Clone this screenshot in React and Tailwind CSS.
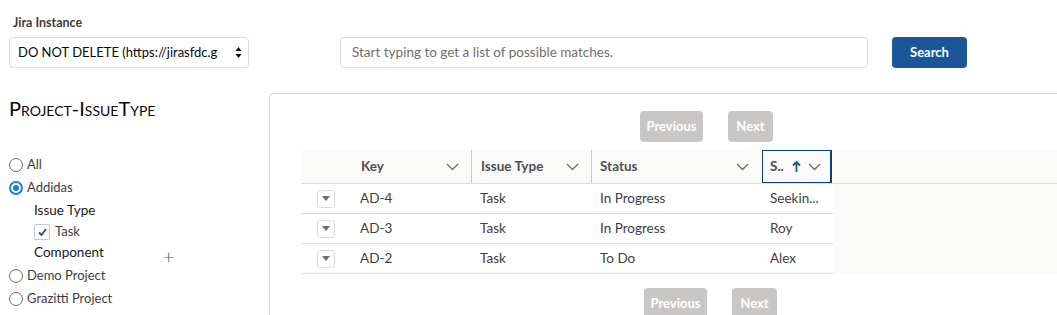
import React from 'react';

const Chevron = ({ className = '' }) => (
  <svg className={className} width="13" height="8" viewBox="0 0 13 8" fill="none">
    <path d="M1 1l5.5 5.5L12 1" stroke="#706e6b" strokeWidth="1.3" />
  </svg>
);

const Radio = ({ checked, label }) => (
  <div className="flex items-center h-[23px]">
    {checked ? (
      <span className="w-[14px] h-[14px] rounded-full border-2 border-[#1b7fe0] flex items-center justify-center">
        <span className="w-[6px] h-[6px] rounded-full bg-[#1b7fe0]" />
      </span>
    ) : (
      <span className="w-[14px] h-[14px] rounded-full border border-[#6b6b6b]" />
    )}
    <span className="ml-[4px] text-[13px] text-[#3e3e3c]">{label}</span>
  </div>
);

const rows = [
  { key: 'AD-4', type: 'Task', status: 'In Progress', s: 'Seekin...' },
  { key: 'AD-3', type: 'Task', status: 'In Progress', s: 'Roy' },
  { key: 'AD-2', type: 'Task', status: 'To Do', s: 'Alex' },
];

const Pager = ({ ml }) => (
  <div className={`flex gap-[25px] ${ml}`}>
    <div className="h-[31px] w-[63px] rounded-[4px] bg-[#c9c7c5] text-white text-[13px] font-bold flex items-center justify-center">Previous</div>
    <div className="h-[31px] w-[45px] rounded-[4px] bg-[#c9c7c5] text-white text-[13px] font-bold flex items-center justify-center">Next</div>
  </div>
);

export default function App() {
  return (
    <div className="w-[1057px] h-[315px] overflow-hidden bg-white font-['Lato',sans-serif] text-[#080707]">
      {/* Top search bar */}
      <div className="flex items-end pt-[15px]">
        <div className="ml-[9px] w-[240px]">
          <div className="pl-[4px] text-[12.5px] font-bold text-[#3e3e3c] leading-[16px] mb-[6px]">Jira Instance</div>
          <div className="h-[31px] border border-[#dddbda] rounded-[4px] flex items-center pl-[8px] pr-[6px]">
            <span className="flex-1 text-[13px] whitespace-nowrap overflow-hidden">DO NOT DELETE (https://jirasfdc.g</span>
            <svg width="7" height="13" viewBox="0 0 7 13" className="ml-[4px]">
              <path d="M3.5 1L6.5 5H0.5z" fill="#111" />
              <path d="M3.5 12L6.5 8H0.5z" fill="#111" />
            </svg>
          </div>
        </div>
        <div className="ml-[91px] w-[528px] h-[31px] border border-[#dddbda] rounded-[4px] flex items-center pl-[11px] text-[13.5px] text-[#706e6b]">
          Start typing to get a list of possible matches.
        </div>
        <button className="ml-[24px] w-[75px] h-[31px] rounded-[4px] bg-[#1c5598] text-white text-[13px] font-bold">Search</button>
      </div>

      <div className="flex mt-[25px]">
        {/* Left column */}
        <div className="w-[269px] pl-[9px] pt-[3px]">
          <div className="text-[20px] leading-[24px] [font-variant:small-caps] text-[#080707]">Project-IssueType</div>
          <div className="mt-[33px]">
            <Radio label="All" />
            <Radio checked label="Addidas" />
            <div className="pl-[25px]">
              <div className="h-[22px] flex items-center text-[13.5px] text-[#181818]">Issue Type</div>
              <div className="h-[21px] flex items-center">
                <span className="w-[16px] h-[16px] border border-[#c9c7c5] rounded-[2px] flex items-center justify-center">
                  <svg width="9" height="8" viewBox="0 0 9 8">
                    <path d="M1 4.5l2.5 2.5L8 1" stroke="#1c5598" strokeWidth="1.8" fill="none" />
                  </svg>
                </span>
                <span className="ml-[5px] text-[13px] text-[#3e3e3c]">Task</span>
              </div>
              <div className="h-[21px] flex items-center text-[13.5px] text-[#181818]">
                <span>Component</span>
                <span className="ml-[59px] mt-[6px] text-[#555] text-[20px] font-light leading-none">+</span>
              </div>
            </div>
            <div className="mt-[1px]">
              <Radio label="Demo Project" />
              <Radio label="Grazitti Project" />
            </div>
          </div>
        </div>

        {/* Results panel */}
        <div className="flex-1 h-[240px] border-l border-t border-[#dddbda] rounded-tl-[4px] pl-[32px] pt-[17px]">
          <Pager ml="ml-[338px]" />
          <div className="mt-[8px] bg-[#fafaf9]">
            <div className="flex h-[34px] border-b border-[#dddbda] text-[13.5px] font-bold text-[#514f4d]">
              <div className="w-[46px]" />
              <div className="w-[124px] flex items-center justify-between pl-[13px] pr-[12px] border-r border-[#c9c7c5]">
                <span>Key</span>
                <Chevron />
              </div>
              <div className="w-[120px] flex items-center justify-between pl-[9px] pr-[12px] border-r border-[#c9c7c5]">
                <span>Issue Type</span>
                <Chevron />
              </div>
              <div className="w-[170px] flex items-center justify-between pl-[8px] pr-[13px]">
                <span>Status</span>
                <Chevron />
              </div>
              <div className="w-[70px] flex items-center border border-r-[2px] border-[#0b3f7e] pl-[7px]">
                <span>S..</span>
                <svg width="9" height="11" viewBox="0 0 9 11" className="ml-[8px]">
                  <path d="M4.5 1v10M1 4.5L4.5 1 8 4.5" stroke="#1c5598" strokeWidth="1.8" fill="none" />
                </svg>
                <Chevron className="ml-[7px]" />
              </div>
            </div>
            <div className="w-[531px] bg-white">
              {rows.map((r) => (
                <div key={r.key} className="flex h-[30px] border-b border-[#dddbda] items-center text-[13.5px] text-[#3e3e3c]">
                  <div className="w-[46px] pl-[15px]">
                    <div className="w-[18px] h-[18px] border border-[#dddbda] rounded-[3px] flex items-center justify-center">
                      <svg width="8" height="5" viewBox="0 0 8 5">
                        <path d="M0 0h8L4 5z" fill="#706e6b" />
                      </svg>
                    </div>
                  </div>
                  <div className="w-[124px] pl-[12px]">{r.key}</div>
                  <div className="w-[120px] pl-[8px]">{r.type}</div>
                  <div className="w-[170px] pl-[8px]">{r.status}</div>
                  <div className="w-[71px] pl-[8px] whitespace-nowrap">{r.s}</div>
                </div>
              ))}
            </div>
          </div>
          <div className="mt-[14px]">
            <Pager ml="ml-[342px]" />
          </div>
        </div>
      </div>
    </div>
  );
}
